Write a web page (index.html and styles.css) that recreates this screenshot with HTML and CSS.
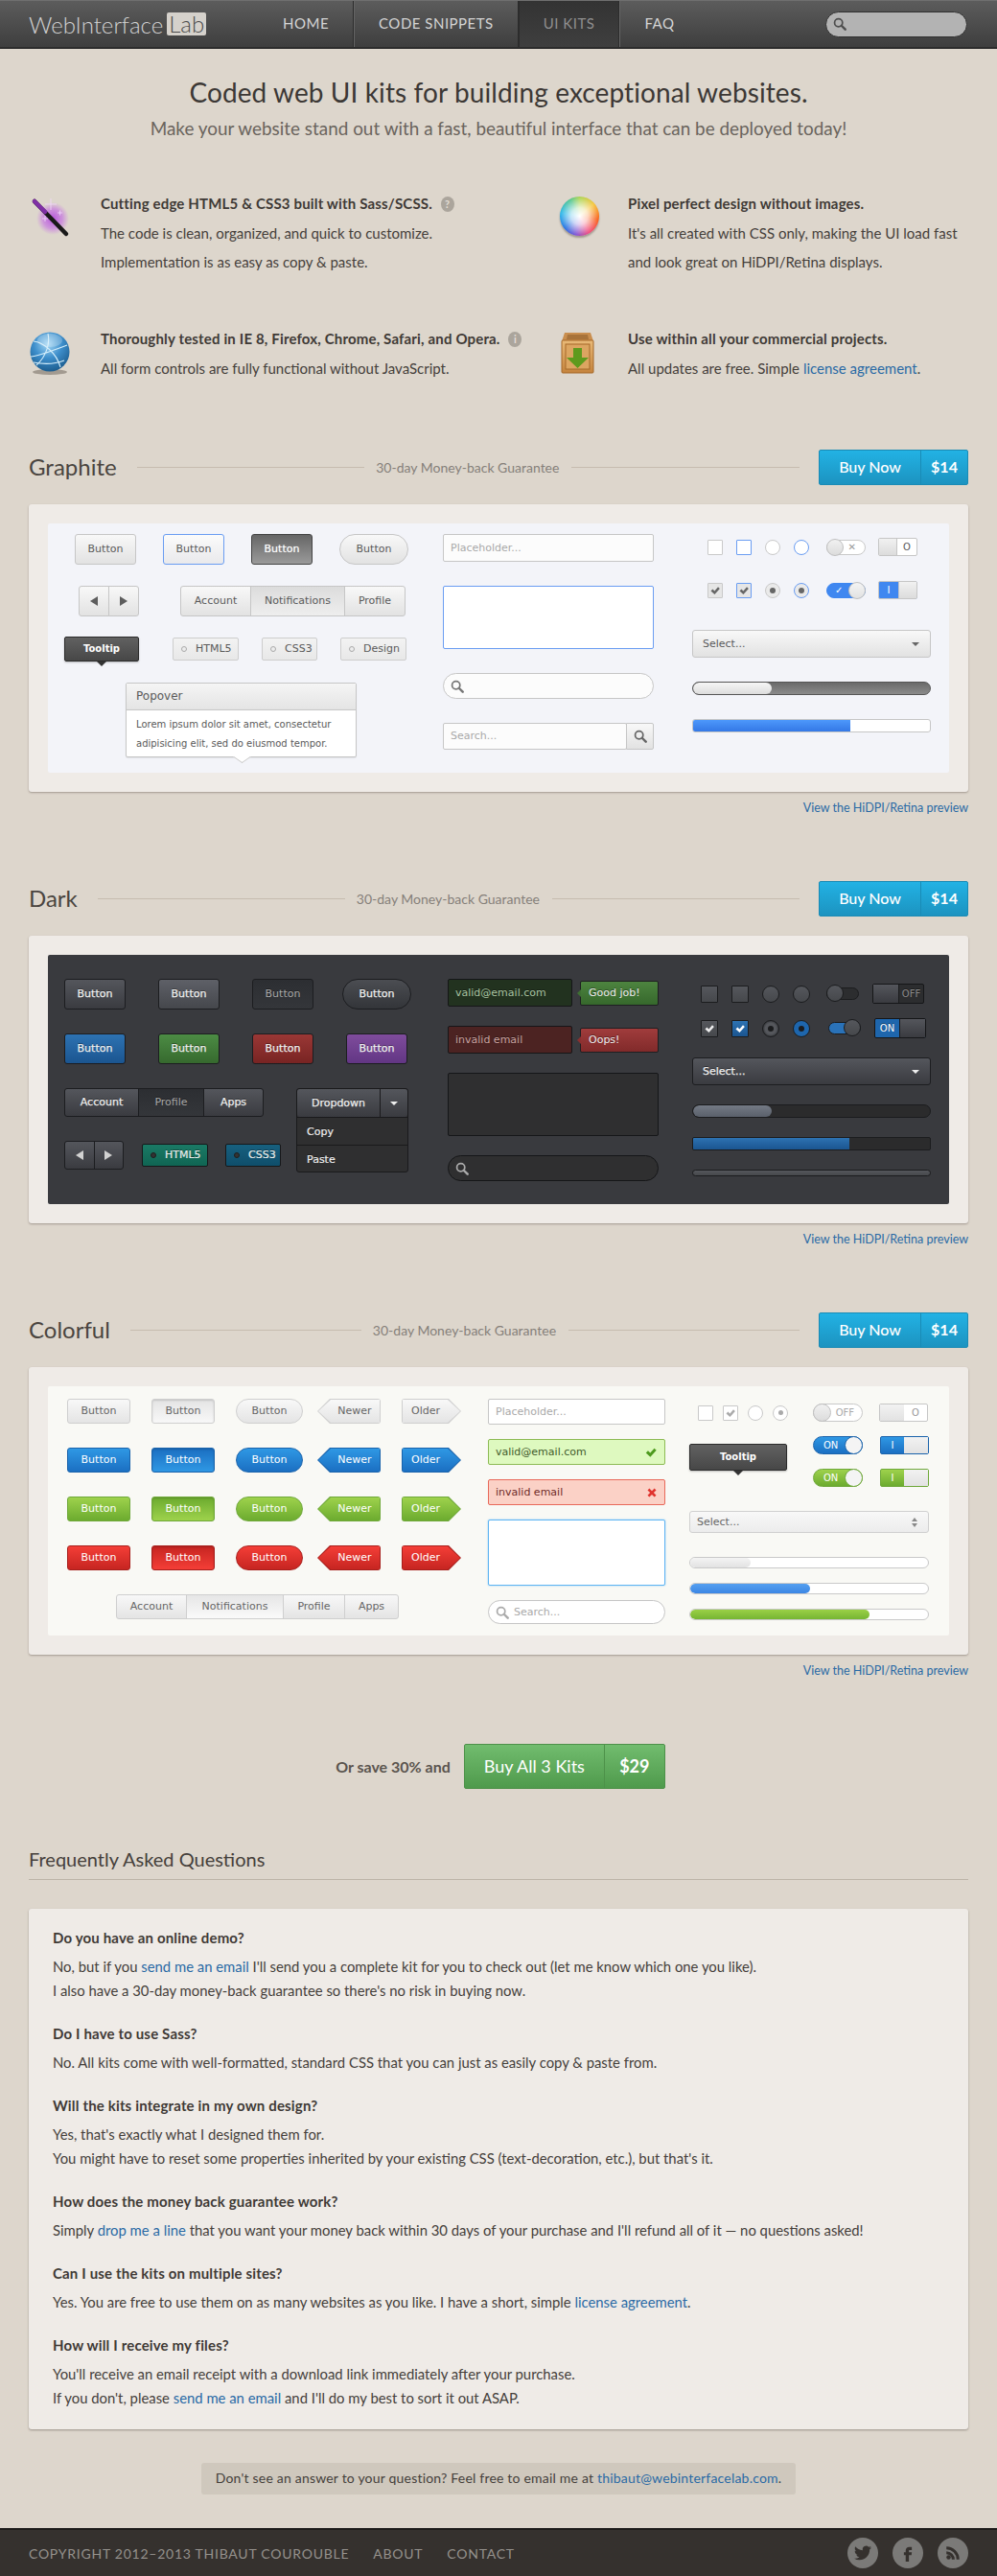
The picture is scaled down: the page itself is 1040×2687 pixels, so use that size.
FILE: index.html
```html
<!DOCTYPE html>
<html lang="en">
<head>
    <meta charset="UTF-8">
    <meta name="viewport" content="width=device-width, initial-scale=1.0">
    <title>Web Interface Lab - UI Kits</title>
    <link rel="stylesheet" href="styles.css">
</head>
<body>
    <svg class="sprites" width="0" height="0">
        <symbol id="i-search" viewBox="0 0 16 16"><circle cx="6.5" cy="6.5" r="4.7" fill="none" stroke="currentColor" stroke-width="2"/><path d="M10 10l4.5 4.5" stroke="currentColor" stroke-width="2.8" stroke-linecap="round"/></symbol>
        <symbol id="i-check" viewBox="0 0 16 16"><path d="M2 8.5l2.5-2.5 2.7 2.6L12 3l2.5 2.3-7.2 8z" fill="currentColor"/></symbol>
        <symbol id="i-cross" viewBox="0 0 16 16"><path d="M2 4.5L4.5 2 8 5.5 11.5 2 14 4.5 10.500 8 14 11.500 11.500 14 8 10.500 4.500 14 2 11.500 5.500 8z" fill="currentColor"/></symbol>
    </svg>

    <div class="topbar">
        <a class="logo" href="#">WebInterface<span>Lab</span></a>
        <ul class="menu">
            <li><a href="#">Home</a></li>
            <li><a href="#">Code Snippets</a></li>
            <li class="current"><a href="#">UI Kits</a></li>
            <li><a href="#">FAQ</a></li>
        </ul>
        <div class="topsearch"><svg class="ico14"><use href="#i-search"/></svg></div>
    </div>

    <div class="page">
        <h1>Coded web UI kits for building exceptional websites.</h1>
        <p class="lead">Make your website stand out with a fast, beautiful interface that can be deployed today!</p>

        <div class="features">
            <div class="feature">
                <svg class="ficon" viewBox="0 0 45 45">
                    <defs>
                        <radialGradient id="glow"><stop offset="0" stop-color="#b13fe0" stop-opacity=".85"/><stop offset=".6" stop-color="#c05fe6" stop-opacity=".55"/><stop offset="1" stop-color="#c86ee8" stop-opacity="0"/></radialGradient>
                    </defs>
                    <circle cx="25" cy="23" r="17" fill="url(#glow)"/>
                    <path d="M6 5l33 34" stroke="#1a1a1a" stroke-width="4.500" stroke-linecap="round"/>
                    <path d="M6 5l11 11" stroke="#7f2fa5" stroke-width="4.500" stroke-linecap="round"/>
                    <path d="M23 2v12M17 8h12M14 23h6M17 20v6M30 17h5M32.500 14.500v5" stroke="#f3d8fb" stroke-width=".8"/>
                </svg>
                <div>
                    <h3>Cutting edge HTML5 &amp; CSS3 built with Sass/SCSS. <span class="hint">?</span></h3>
                    <p>The code is clean, organized, and quick to customize.</p>
                    <p>Implementation is as easy as copy &amp; paste.</p>
                </div>
            </div>
            <div class="feature">
                <div class="ficon wheel-box"><div class="wheel"></div></div>
                <div>
                    <h3>Pixel perfect design without images.</h3>
                    <p>It's all created with CSS only, making the UI load fast</p>
                    <p>and look great on HiDPI/Retina displays.</p>
                </div>
            </div>
            <div class="feature">
                <svg class="ficon" viewBox="0 0 45 45">
                    <defs>
                        <radialGradient id="ball" cx=".45" cy=".3" r=".8"><stop offset="0" stop-color="#a5d8f5"/><stop offset=".45" stop-color="#3d8ecb"/><stop offset="1" stop-color="#14507f"/></radialGradient>
                    </defs>
                    <ellipse cx="22" cy="42" rx="18" ry="3" fill="#5b5348" opacity=".45"/>
                    <circle cx="22" cy="21" r="20.500" fill="url(#ball)"/>
                    <path d="M5 10c10 1 24 12 28 27M20 2c2 8 0 22-12 33M2 26c10-1 24-7 38-12M5 32c10 2 22 2 32-2" fill="none" stroke="#d4eefb" stroke-width="1.100"/>
                    <ellipse cx="22" cy="9" rx="13" ry="7" fill="#fff" opacity=".22"/>
                </svg>
                <div>
                    <h3>Thoroughly tested in IE 8, Firefox, Chrome, Safari, and Opera. <span class="hint">i</span></h3>
                    <p>All form controls are fully functional without JavaScript.</p>
                </div>
            </div>
            <div class="feature">
                <svg class="ficon" viewBox="0 0 45 45">
                    <defs>
                        <linearGradient id="wood" x1="0" x2="0" y1="0" y2="1"><stop offset="0" stop-color="#e9ba78"/><stop offset="1" stop-color="#c5843d"/></linearGradient>
                    </defs>
                    <path d="M9 1h27l3 9H6z" fill="#c98e4e"/>
                    <path d="M12 3h21l1 5H11z" fill="#a8733a"/>
                    <rect x="6" y="9" width="33" height="34" rx="1" fill="url(#wood)" stroke="#a5692a"/>
                    <rect x="10" y="13" width="25" height="26" fill="#dca561" stroke="#a5692a"/>
                    <path d="M18 17h9v10h7L22.500 38 11 27h7z" fill="#5f9a1d"/>
                </svg>
                <div>
                    <h3>Use within all your commercial projects.</h3>
                    <p>All updates are free. Simple <a href="#">license agreement</a>.</p>
                </div>
            </div>
        </div>

        <!-- graphite -->
        <div class="kit-head">
            <h2>Graphite</h2>
            <span class="rule"></span>
            <span class="guarantee">30-day Money-back Guarantee</span>
            <span class="rule"></span>
            <a class="buy" href="#"><span class="buy-label">Buy Now</span><span class="buy-price">$14</span></a>
        </div>
        <div class="kit">
            <div class="inner graphite">
                <div class="g-a">
                    <div class="row g-r1">
                        <div class="btn w64">Button</div>
                        <div class="btn w64 focus">Button</div>
                        <div class="btn w64 active">Button</div>
                        <div class="btn w72 pill">Button</div>
                    </div>
                    <div class="row g-r2">
                        <div class="pager"><div class="btn"><i class="tri-l"></i></div><div class="btn"><i class="tri-r"></i></div></div>
                        <div class="tabs">
                            <div class="btn g-t1">Account</div>
                            <div class="btn g-t2 on">Notifications</div>
                            <div class="btn g-t3">Profile</div>
                        </div>
                    </div>
                    <div class="row g-r3">
                        <div class="tip g-tip">Tooltip</div>
                        <div class="tags">
                            <div class="tag w69"><i></i>HTML5</div>
                            <div class="tag w58"><i></i>CSS3</div>
                            <div class="tag w69"><i></i>Design</div>
                        </div>
                    </div>
                    <div class="popover">
                        <div class="popover-title">Popover</div>
                        <div class="popover-body">Lorem ipsum dolor sit amet, consectetur adipisicing elit, sed do eiusmod tempor.</div>
                    </div>
                </div>
                <div class="g-b">
                    <div class="field g-input muted">Placeholder...</div>
                    <div class="field g-area focus"></div>
                    <div class="field g-search round"><svg class="ico14"><use href="#i-search"/></svg></div>
                    <div class="combo">
                        <div class="field muted">Search...</div>
                        <div class="btn"><svg class="ico14"><use href="#i-search"/></svg></div>
                    </div>
                </div>
                <div class="g-c">
                    <div class="ctl-row">
                        <i class="box"></i><i class="box focus"></i><i class="radio"></i><i class="radio focus"></i>
                        <div class="switch"><b class="knob"></b><span class="s-r">&#10005;</span></div>
                        <div class="toggle"><b></b><span>O</span></div>
                    </div>
                    <div class="ctl-row">
                        <i class="box"><svg class="ico12"><use href="#i-check"/></svg></i>
                        <i class="box focus"><svg class="ico12"><use href="#i-check"/></svg></i>
                        <i class="radio dot"></i><i class="radio focus dot"></i>
                        <div class="switch on"><span class="s-l">&#10003;</span><b class="knob"></b></div>
                        <div class="toggle on"><span>I</span><b></b></div>
                    </div>
                    <div class="btn select">Select...<i class="caret"></i></div>
                    <div class="bar bar-a"><div class="fill" style="width: 33%"></div></div>
                    <div class="bar bar-b"><div class="fill" style="width: 66.400%"></div></div>
                </div>
            </div>
        </div>
        <a class="retina" href="#">View the HiDPI/Retina preview</a>

        <!-- dark -->
        <div class="kit-head">
            <h2>Dark</h2>
            <span class="rule"></span>
            <span class="guarantee">30-day Money-back Guarantee</span>
            <span class="rule"></span>
            <a class="buy" href="#"><span class="buy-label">Buy Now</span><span class="buy-price">$14</span></a>
        </div>
        <div class="kit">
            <div class="inner dark">
                <div class="d-a">
                    <div class="row d-r1">
                        <div class="btn w64">Button</div>
                        <div class="btn w64 hover">Button</div>
                        <div class="btn w64 active">Button</div>
                        <div class="btn w72 pill">Button</div>
                    </div>
                    <div class="row d-r2">
                        <div class="btn w64 blue">Button</div>
                        <div class="btn w64 green">Button</div>
                        <div class="btn w64 red">Button</div>
                        <div class="btn w64 purple">Button</div>
                    </div>
                    <div class="d-low">
                        <div class="d-low-left">
                            <div class="tabs">
                                <div class="btn d-t1">Account</div>
                                <div class="btn d-t2 on">Profile</div>
                                <div class="btn d-t3">Apps</div>
                            </div>
                            <div class="d-r4">
                                <div class="pager"><div class="btn"><i class="tri-l"></i></div><div class="btn"><i class="tri-r"></i></div></div>
                                <div class="tag w69 teal"><i></i>HTML5</div>
                                <div class="tag w58 navy"><i></i>CSS3</div>
                            </div>
                        </div>
                        <div class="dropdown">
                            <div class="dropdown-top">
                                <div class="btn">Dropdown</div>
                                <div class="btn"><i class="caret"></i></div>
                            </div>
                            <div class="dropdown-item">Copy</div>
                            <div class="dropdown-item">Paste</div>
                        </div>
                    </div>
                </div>
                <div class="d-b">
                    <div class="d-field-row">
                        <div class="field valid">valid@email.com</div>
                        <div class="note good">Good job!</div>
                    </div>
                    <div class="d-field-row">
                        <div class="field invalid">invalid email</div>
                        <div class="note bad">Oops!</div>
                    </div>
                    <div class="field d-area"></div>
                    <div class="field d-search round"><svg class="ico14"><use href="#i-search"/></svg></div>
                </div>
                <div class="d-c">
                    <div class="ctl-row">
                        <i class="box"></i><i class="box"></i><i class="radio"></i><i class="radio"></i>
                        <div class="switch"><b class="knob"></b></div>
                        <div class="toggle"><b></b><span>OFF</span></div>
                    </div>
                    <div class="ctl-row">
                        <i class="box"><svg class="ico12"><use href="#i-check"/></svg></i>
                        <i class="box on"><svg class="ico12"><use href="#i-check"/></svg></i>
                        <i class="radio dot"></i><i class="radio on dot"></i>
                        <div class="switch on"><b class="knob"></b></div>
                        <div class="toggle on"><span>ON</span><b></b></div>
                    </div>
                    <div class="btn select">Select...<i class="caret"></i></div>
                    <div class="bar bar-a"><div class="fill" style="width: 33%"></div></div>
                    <div class="bar bar-b"><div class="fill" style="width: 66%"></div></div>
                    <div class="bar-slim"></div>
                </div>
            </div>
        </div>
        <a class="retina" href="#">View the HiDPI/Retina preview</a>

        <!-- colorful -->
        <div class="kit-head">
            <h2>Colorful</h2>
            <span class="rule"></span>
            <span class="guarantee">30-day Money-back Guarantee</span>
            <span class="rule"></span>
            <a class="buy" href="#"><span class="buy-label">Buy Now</span><span class="buy-price">$14</span></a>
        </div>
        <div class="kit">
            <div class="inner colorful">
                <div class="c-a">
                    <div class="c-row grey">
                        <div class="btn w66">Button</div><div class="btn w66 active">Button</div><div class="btn w70 pill">Button</div>
                        <div class="btn prev"><span>Newer</span></div><div class="btn next"><span>Older</span></div>
                    </div>
                    <div class="c-row blue">
                        <div class="btn w66">Button</div><div class="btn w66 active">Button</div><div class="btn w70 pill">Button</div>
                        <div class="btn prev"><span>Newer</span></div><div class="btn next"><span>Older</span></div>
                    </div>
                    <div class="c-row green">
                        <div class="btn w66">Button</div><div class="btn w66 active">Button</div><div class="btn w70 pill">Button</div>
                        <div class="btn prev"><span>Newer</span></div><div class="btn next"><span>Older</span></div>
                    </div>
                    <div class="c-row red">
                        <div class="btn w66">Button</div><div class="btn w66 active">Button</div><div class="btn w70 pill">Button</div>
                        <div class="btn prev"><span>Newer</span></div><div class="btn next"><span>Older</span></div>
                    </div>
                    <div class="tabs grey">
                        <div class="btn c-t1">Account</div>
                        <div class="btn c-t2 on">Notifications</div>
                        <div class="btn c-t3">Profile</div>
                        <div class="btn c-t4">Apps</div>
                    </div>
                </div>
                <div class="c-b">
                    <div class="field muted">Placeholder...</div>
                    <div class="field valid">valid@email.com<svg class="ico14"><use href="#i-check"/></svg></div>
                    <div class="field invalid">invalid email<svg class="ico12"><use href="#i-cross"/></svg></div>
                    <div class="field c-area"></div>
                    <div class="field c-search round muted"><svg class="ico14"><use href="#i-search"/></svg>Search...</div>
                </div>
                <div class="c-c">
                    <div class="ctl-row">
                        <i class="box"></i>
                        <i class="box"><svg class="ico12"><use href="#i-check"/></svg></i>
                        <i class="radio"></i><i class="radio dot"></i>
                        <div class="switch"><b class="knob"></b><span class="s-r">OFF</span></div>
                        <div class="toggle"><b></b><span>O</span></div>
                    </div>
                    <div class="c-mid">
                        <div class="tip c-tip">Tooltip</div>
                        <div class="c-switches">
                            <div class="c-pair blue">
                                <div class="switch on"><span class="s-l">ON</span><b class="knob"></b></div>
                                <div class="toggle on"><span>I</span><b></b></div>
                            </div>
                            <div class="c-pair green">
                                <div class="switch on"><span class="s-l">ON</span><b class="knob"></b></div>
                                <div class="toggle on"><span>I</span><b></b></div>
                            </div>
                        </div>
                    </div>
                    <div class="btn select">Select...<i class="updown"></i></div>
                    <div class="bar"><div class="fill plain" style="width: 25.500%"></div></div>
                    <div class="bar"><div class="fill blue" style="width: 50.500%"></div></div>
                    <div class="bar"><div class="fill green" style="width: 75.500%"></div></div>
                </div>
            </div>
        </div>
        <a class="retina" href="#">View the HiDPI/Retina preview</a>

        <div class="bundle">
            <span>Or save 30% and</span>
            <a class="buy buy-all" href="#"><span class="buy-label">Buy All 3 Kits</span><span class="buy-price">$29</span></a>
        </div>

        <h4 class="faq-title">Frequently Asked Questions</h4>
        <div class="faq">
            <h5>Do you have an online demo?</h5>
            <p>No, but if you <a href="#">send me an email</a> I'll send you a complete kit for you to check out (let me know which one you like).</p>
            <p>I also have a 30-day money-back guarantee so there's no risk in buying now.</p>
            <h5>Do I have to use Sass?</h5>
            <p>No. All kits come with well-formatted, standard CSS that you can just as easily copy &amp; paste from.</p>
            <h5>Will the kits integrate in my own design?</h5>
            <p>Yes, that's exactly what I designed them for.</p>
            <p>You might have to reset some properties inherited by your existing CSS (text-decoration, etc.), but that's it.</p>
            <h5>How does the money back guarantee work?</h5>
            <p>Simply <a href="#">drop me a line</a> that you want your money back within 30 days of your purchase and I'll refund all of it &mdash; no questions asked!</p>
            <h5>Can I use the kits on multiple sites?</h5>
            <p>Yes. You are free to use them on as many websites as you like. I have a short, simple <a href="#">license agreement</a>.</p>
            <h5>How will I receive my files?</h5>
            <p>You'll receive an email receipt with a download link immediately after your purchase.</p>
            <p>If you don't, please <a href="#">send me an email</a> and I'll do my best to sort it out ASAP.</p>
        </div>

        <div class="ask">Don't see an answer to your question? Feel free to email me at <a href="#">thibaut@webinterfacelab.com</a>.</div>
    </div>

    <div class="footer">
        <div class="footer-in">
            <span>Copyright 2012&ndash;2013 Thibaut Courouble</span>
            <a href="#">About</a>
            <a href="#">Contact</a>
            <div class="social">
                <a href="#"><svg viewBox="0 0 24 24"><path d="M23.950 4.570a10 10 0 0 1-2.820.770 4.960 4.960 0 0 0 2.160-2.720c-.950.550-2 .950-3.120 1.170a4.920 4.920 0 0 0-8.380 4.480C7.690 8.100 4.070 6.130 1.640 3.160a4.820 4.820 0 0 0-.660 2.470c0 1.710.870 3.210 2.190 4.100a4.900 4.900 0 0 1-2.230-.610v.060a4.920 4.920 0 0 0 3.950 4.830 5 5 0 0 1-2.210.080 4.940 4.940 0 0 0 4.600 3.420A9.870 9.870 0 0 1 0 19.540a13.940 13.940 0 0 0 7.550 2.210c9.050 0 14-7.500 14-13.980 0-.210 0-.420-.020-.630a9.940 9.940 0 0 0 2.460-2.550z"/></svg></a>
                <a href="#"><svg viewBox="0 0 24 24"><path d="M14 8h3.500V3.500H14c-3 0-5 2-5 5V11H6.500v4H9v9h4.500v-9H17l.5-4h-4V8.800c0-.5.200-.8.500-.8z"/></svg></a>
                <a href="#"><svg viewBox="0 0 24 24"><circle cx="6" cy="18" r="3"/><path d="M3 3v4a14 14 0 0 1 14 14h4A18 18 0 0 0 3 3zm0 6.500v4a7.500 7.500 0 0 1 7.500 7.500h4A11.500 11.500 0 0 0 3 9.500z"/></svg></a>
            </div>
        </div>
    </div>
</body>
</html>
```

FILE: styles.css
```css
*{
    margin: 0;
    padding: 0;
}
body{
    background: #ddd6cc;
    color: #45403b;
    font: 14px/25px Lato, "Open Sans", sans-serif;
}
a{
    color: #2a6aa5;
    text-decoration: none;
}
i, b{
    display: block;
    font-style: normal;
}
ul{
    list-style: none;
}
.sprites{
    position: absolute;
}
.ico14{
    width: 14px;
    height: 14px;
}
.ico12{
    width: 12px;
    height: 12px;
}

/* top bar */
.topbar{
    height: 48px;
    padding: 0 31px 0 30px;
    display: flex;
    align-items: center;
    background: linear-gradient(#5c5c5c, #3e3e3e);
    border-top: 1px solid #6f6f6f;
    border-bottom: 2px solid #2c2c2c;
}
.logo{
    color: #d2d2d2;
    font-size: 24px;
    font-weight: 300;
    display: flex;
    align-items: center;
    width: 240px;
}
.logo span{
    margin-left: 4px;
    width: 41px;
    height: 24px;
    line-height: 24px;
    text-align: center;
    background: #d5d1cb;
    color: #4a4a4a;
    border-radius: 2px;
}
.menu{
    display: flex;
    height: 48px;
}
.menu li{
    border-right: 1px solid #2c2c2c;
    border-left: 1px solid #666;
    padding: 0 25px;
    line-height: 47px;
    font-size: 15px;
    letter-spacing: .5px;
    text-transform: uppercase;
}
.menu li:first-child{
    border-left: 0;
}
.menu li:last-child{
    border-right: 0;
}
.menu a{
    color: #d4d4d4;
}
.menu .current{
    background: linear-gradient(#333, #3f3f3f);
    border-left: 1px solid #2c2c2c;
}
.menu .current a{
    color: #8f8f8f;
}
.topsearch{
    margin-left: auto;
    width: 148px;
    height: 27px;
    box-sizing: border-box;
    padding-left: 7px;
    display: flex;
    align-items: center;
    background: #b3b3b3;
    border: 1px solid #2f2f2f;
    border-radius: 14px;
    color: #4e4e4e;
}

/* intro */
.page{
    width: 980px;
    margin: 0 auto;
}
h1{
    padding-top: 25px;
    font-size: 28px;
    line-height: 40px;
    font-weight: 400;
    letter-spacing: .1px;
    text-align: center;
    color: #3c3835;
}
.lead{
    margin-top: 6px;
    font-size: 18.9px;
    line-height: 24px;
    text-align: center;
    color: #6a645d;
}
.features{
    margin-top: 51px;
    display: grid;
    grid-template-columns: 550px 430px;
    row-gap: 50px;
}
.feature{
    display: flex;
    font-size: 15px;
    line-height: 30px;
}
.feature h3{
    font-size: 15px;
    font-weight: 700;
    letter-spacing: .16px;
    line-height: 31px;
    color: #3f3a36;
}
.ficon{
    flex: none;
    width: 45px;
    height: 45px;
    margin: 8px 30px 0 0;
}
.wheel-box{
    display: flex;
    justify-content: center;
    padding-left: 3px;
    box-sizing: border-box;
}
.wheel{
    width: 41px;
    height: 41px;
    border-radius: 50%;
    background:
        radial-gradient(circle, #fff 0, rgba(255,255,255,.75) 30%, rgba(255,255,255,0) 72%),
        conic-gradient(#a7d24a, #f5c331 50deg, #f9560c 100deg, #f0447a 150deg, #7d4bd0 190deg, #1e6ce0 230deg, #23b4e8 280deg, #4cc48b 330deg, #a7d24a);
    box-shadow: 0 2px 2px rgba(70,60,50,.4);
}
.hint{
    display: inline-block;
    width: 14px;
    height: 16px;
    margin-left: 5px;
    background: #aba59c;
    border-radius: 50%;
    color: #e4ded5;
    font-size: 11px;
    line-height: 16px;
    text-align: center;
    vertical-align: 1px;
}

/* kit heading */
.kit-head{
    margin-top: 66px;
    display: flex;
    align-items: center;
}
.features + .kit-head{
    margin-top: 70px;
}
.kit-head h2{
    font-size: 24px;
    line-height: 35px;
    padding-bottom: 2px;
    font-weight: 400;
    color: #4a4540;
    margin-right: 21px;
}
.rule{
    flex: 1;
    height: 1px;
    background: #c6bcaf;
}
.guarantee{
    margin: 0 13px 0 12px;
    font-size: 14px;
    color: #85807a;
}
.buy{
    flex: none;
    width: 156px;
    margin-left: 20px;
    height: 37px;
    box-sizing: border-box;
    display: flex;
    color: #fff;
    font-size: 16px;
    line-height: 34px;
    text-align: center;
    background: linear-gradient(#22b2e4, #1c93c0);
    border: 1px solid #1a8bb5;
    border-radius: 2px;
}
.buy-label{
    flex: none;
    width: 105px;
    border-right: 1px solid #1a8bb5;
    font-weight: 500;
}
.buy-price{
    flex: 1;
    font-weight: 700;
}
.kit{
    margin-top: 20px;
    height: 300px;
    box-sizing: border-box;
    padding: 20px;
    background: #efebe7;
    border-radius: 3px;
    box-shadow: 0 1px 2px rgba(90,80,70,.45);
}
.inner{
    height: 260px;
    display: flex;
    border-radius: 2px;
    font: 11px/20px "DejaVu Sans", sans-serif;
}
.retina{
    display: block;
    margin-top: 7px;
    font-size: 12.5px;
    line-height: 20px;
    text-align: right;
}

/* shared widgets */
.row{
    display: flex;
}
.btn{
    box-sizing: border-box;
    display: flex;
    align-items: center;
    justify-content: center;
    border: 1px solid #c6c6c6;
    border-radius: 3px;
}
.w64{ width: 64px; }
.w66{ width: 66px; }
.w70{ width: 70px; }
.w72{ width: 72px; }
.w69{ width: 69px; }
.w58{ width: 58px; }
.pill{
    border-radius: 16px;
}
.tri-l, .tri-r{
    width: 0;
    height: 0;
    border: 5px solid transparent;
    border-width: 5px 8px;
}
.tri-l{
    border-right-color: #5d5d5d;
    margin-left: -8px;
}
.tri-r{
    border-left-color: #5d5d5d;
    margin-right: -8px;
}
.caret{
    width: 0;
    height: 0;
    border: 4px solid transparent;
    border-top: 4px solid #666;
    border-bottom: 0;
    border-width: 4px 4px 0;
}
.tabs, .pager, .combo, .dropdown-top{
    display: flex;
}
.tabs .btn, .pager .btn, .combo .btn, .dropdown-top .btn{
    border-radius: 0;
    margin-left: -1px;
}
.tabs .btn:first-child, .pager .btn:first-child, .dropdown-top .btn:first-child{
    border-radius: 3px 0 0 3px;
    margin-left: 0;
}
.tabs .btn:last-child, .pager .btn:last-child, .dropdown-top .btn:last-child{
    border-radius: 0 3px 3px 0;
}
.pager .btn{
    width: 32px;
    height: 100%;
}
.tip{
    position: relative;
    box-sizing: border-box;
    display: flex;
    align-items: center;
    justify-content: center;
    color: #fff;
    font-size: 10px;
    font-weight: 700;
    background: linear-gradient(#616161, #474747);
    border: 1px solid #2b2b2b;
    border-radius: 2px;
    box-shadow: 0 1px 2px rgba(0,0,0,.25);
}
.tip::after{
    content: "";
    position: absolute;
    left: 50%;
    bottom: -6px;
    margin-left: -5px;
    border: 5px solid transparent;
    border-top-color: #333;
    border-bottom: 0;
}
.tag{
    box-sizing: border-box;
    height: 24px;
    display: flex;
    align-items: center;
    border: 1px solid #cdcdcd;
    border-radius: 2px;
    padding-left: 8px;
}
.tag i{
    width: 4px;
    height: 4px;
    margin-right: 9px;
    border: 1px solid #aaa;
    border-radius: 50%;
}
.field{
    box-sizing: border-box;
    display: flex;
    align-items: center;
    padding: 0 7px;
    background: #fff;
    border: 1px solid #c6c6c6;
    border-radius: 2px;
    font-size: 11px;
}
.muted{
    color: #a9a9a9;
}
.round{
    border-radius: 14px;
}
.ctl-row{
    display: flex;
    align-items: center;
}
.box, .radio{
    flex: none;
    box-sizing: border-box;
    display: flex;
    align-items: center;
    justify-content: center;
    border: 1px solid #c9c9c9;
    border-radius: 1px;
    background: #fff;
    color: #666;
}
.radio{
    border-radius: 50%;
}
.radio.dot::after{
    content: "";
    width: 6px;
    height: 6px;
    border-radius: 50%;
    background: #666;
}
.switch{
    position: relative;
    box-sizing: border-box;
    border: 1px solid #c9c9c9;
    background: #fff;
    color: #999;
}
.knob{
    position: absolute;
    top: -2px;
    box-sizing: border-box;
    border-radius: 50%;
    border: 1px solid #c0c0c0;
    background: linear-gradient(#f1f1f1, #dcdcdc);
}
.s-r, .s-l{
    position: absolute;
    top: 0;
    bottom: 0;
    display: flex;
    align-items: center;
}
.toggle{
    box-sizing: border-box;
    display: flex;
    align-items: stretch;
    border: 1px solid #c6c6c6;
    border-radius: 2px;
    background: #fff;
}
.toggle b, .toggle span{
    flex: 1;
    display: flex;
    align-items: center;
    justify-content: center;
}
.select{
    justify-content: flex-start;
    position: relative;
    padding-left: 10px;
}
.select .caret, .select .updown{
    position: absolute;
    right: 11px;
    top: 50%;
    margin-top: -2px;
}
.bar{
    box-sizing: border-box;
    overflow: hidden;
}
.fill{
    height: 100%;
}

/* graphite */
.graphite{
    background: #f3f4f9;
    color: #5a5a5a;
}
.graphite .btn{
    background: linear-gradient(#f8f8f8, #e2e2e2);
}
.graphite .btn.focus{
    border-color: #6a9df2;
    background: linear-gradient(#fbfbfb, #e9e9ec);
}
.graphite .btn.active{
    border-color: #444;
    background: linear-gradient(#666, #9a9a9a);
    color: #fff;
    text-shadow: 0 0 1px rgba(255,255,255,.6);
}
.graphite .btn.on{
    background: linear-gradient(#dcdcdc, #eee);
}
.g-a{
    width: 359px;
    margin-left: 17px;
    padding-top: 11px;
}
.g-r1{
    height: 32px;
    padding-left: 11px;
    gap: 28px;
}
.g-r2{
    height: 32px;
    margin-top: 22px;
    padding-left: 15px;
    gap: 43px;
}
.g-t1{ width: 74px; }
.g-t2{ width: 99px; }
.g-t3{ width: 64px; }
.g-r3{
    margin-top: 21px;
    height: 26px;
    align-items: center;
    gap: 35px;
}
.g-tip{
    width: 78px;
    height: 26px;
}
.tags{
    display: flex;
    gap: 24px;
}
.graphite .tag{
    background: linear-gradient(#f3f3f3, #e8e8e8);
}
.popover{
    position: relative;
    width: 241px;
    height: 78px;
    box-sizing: border-box;
    margin: 22px 0 0 64px;
    background: #fff;
    border: 1px solid #c6c6c6;
    border-radius: 2px;
    box-shadow: 0 1px 1px rgba(0,0,0,.08);
}
.popover::after{
    content: "";
    position: absolute;
    left: 50%;
    bottom: -7px;
    width: 12px;
    height: 12px;
    margin-left: -6px;
    background: #fff;
    border: solid #c6c6c6;
    border-width: 0 1px 1px 0;
    transform: scaleY(.7) rotate(45deg);
}
.popover-title{
    height: 27px;
    padding-left: 10px;
    line-height: 26px;
    font-size: 12px;
    background: linear-gradient(#f5f5f5, #e4e4e4);
    border-bottom: 1px solid #c6c6c6;
}
.popover-body{
    padding: 5px 10px 0;
    font-size: 10px;
    line-height: 20px;
}
.g-b{
    width: 220px;
    margin-left: 36px;
    padding-top: 11px;
}
.g-input{
    height: 29px;
    background: #fcfcfc;
}
.g-area{
    height: 66px;
    margin-top: 25px;
}
.g-area.focus{
    border-color: #6a9df2;
}
.g-search{
    height: 27px;
    margin-top: 25px;
    background: #fcfcfc;
    color: #777;
}
.combo{
    height: 28px;
    margin-top: 25px;
}
.combo .field{
    flex: 1;
    background: #fcfcfc;
}
.combo .btn{
    width: 29px;
    color: #666;
    border-radius: 0 2px 2px 0;
}
.g-c{
    width: 249px;
    margin-left: 40px;
    padding-top: 15px;
}
.g-c .ctl-row{
    height: 19px;
    padding-left: 16px;
    gap: 14px;
}
.g-c .ctl-row + .ctl-row{
    margin-top: 26px;
}
.g-c .box, .g-c .radio{
    width: 16px;
    height: 16px;
}
.g-c .focus{
    border-color: #6a9df2;
}
.graphite .box:has(svg){
    background: #e6e6e6;
}
.graphite .radio.dot{
    background: #eaeaea;
}
.g-c .switch{
    width: 41px;
    height: 16px;
    margin-left: 4px;
    border-radius: 9px;
}
.g-c .switch .knob{
    width: 18px;
    height: 18px;
    left: -1px;
}
.g-c .switch.on{
    background: #3f87f0;
    border-color: #3f87f0;
}
.g-c .switch.on .knob{
    left: auto;
    right: -1px;
    background: linear-gradient(#f4f4f4, #e2e2e2);
}
.g-c .s-r{
    right: 9px;
    font-size: 10px;
}
.g-c .s-l{
    left: 8px;
    color: #fff;
    font-size: 10px;
}
.g-c .toggle{
    width: 41px;
    height: 19px;
    font-size: 10px;
    margin-left: -1px;
}
.g-c .toggle b{
    flex: none;
    width: 18px;
    background: linear-gradient(#f1f1f1, #dcdcdc);
    border-right: 1px solid #c6c6c6;
}
.g-c .toggle.on b{
    border-right: 0;
    border-left: 1px solid #c6c6c6;
}
.g-c .toggle.on{
    background: #3f87f0;
    color: #fff;
}
.g-c .select{
    height: 29px;
    margin-top: 32px;
}
.g-c .bar{
    height: 14px;
    margin-top: 25px;
    border: 1px solid #c6c6c6;
    border-radius: 3px;
    background: #fff;
}
.g-c .bar-a{
    border: 1px solid #555;
    border-radius: 7px;
    background: linear-gradient(#6a6a6a, #8b8b8b);
}
.g-c .bar-a .fill{
    background: linear-gradient(#f6f6f6, #ddd);
    border-radius: 7px;
}
.g-c .bar-b .fill{
    background: linear-gradient(#4d98fb, #3478e6);
}

/* dark */
.dark{
    background: #393a3e;
    color: #f0f0f0;
    text-shadow: 0 -1px 0 rgba(0,0,0,.4);
}
.dark .btn{
    border-color: #1c1d20;
    background: linear-gradient(#54565c, #3a3b40);
    -webkit-text-stroke: .25px;
}
.dark .btn.hover{
    background: linear-gradient(#5e6067, #45474c);
}
.dark .btn.active, .dark .btn.on{
    background: linear-gradient(#2c2e32, #34363a);
    color: #a9a9a9;
    -webkit-text-stroke: 0;
}
.dark .btn.pill{
    background: linear-gradient(#4b4d52, #333539);
}
.dark .btn.blue{ background: linear-gradient(#2d72b2, #1b5590); }
.dark .btn.green{ background: linear-gradient(#4c8c44, #36692e); }
.dark .btn.red{ background: linear-gradient(#9a3735, #782423); }
.dark .btn.purple{ background: linear-gradient(#7f4c9c, #623684); }
.dark .tri-l{ border-right-color: #d2d2d2; }
.dark .tri-r{ border-left-color: #d2d2d2; }
.dark .caret{ border-top-color: #eee; }
.d-a{
    width: 362px;
    margin-left: 17px;
    padding-top: 25px;
}
.d-r1{
    height: 32px;
    gap: 34px;
}
.d-r1 .pill{
    margin-left: -4px;
}
.d-r2{
    height: 32px;
    margin-top: 25px;
    gap: 34px;
}
.d-low{
    display: flex;
    margin-top: 25px;
}
.d-low-left{
    width: 242px;
}
.d-low .tabs{
    height: 30px;
}
.d-t1{ width: 78px; }
.d-t2{ width: 69px; }
.d-t3{ width: 63px; }
.d-r4{
    display: flex;
    align-items: center;
    height: 30px;
    margin-top: 25px;
}
.d-r4 .pager{
    width: 62px;
    height: 30px;
    margin-right: 19px;
}
.d-r4 .tag{
    border-color: #16181a;
    color: #e8f0ee;
    -webkit-text-stroke: .2px;
}
.d-r4 .tag i{
    border-color: #1e1e1e;
    background: #333;
}
.teal{
    background: linear-gradient(#1a7a65, #106553);
    margin-right: 18px;
}
.navy{
    background: linear-gradient(#17607f, #0f4e6b);
}
.dropdown{
    width: 117px;
    height: 88px;
    box-sizing: border-box;
    background: #2f2f30;
    border: 1px solid #1a1a1c;
    border-radius: 3px;
}
.dropdown-top{
    height: 29px;
    border-bottom: 1px solid #1a1a1c;
    margin-bottom: -1px;
    box-sizing: content-box;
}
.dropdown-top .btn{
    border: 0;
    height: 29px;
}
.dropdown-top .btn:first-child{
    width: 87px;
    border-right: 1px solid #1a1a1c;
}
.dropdown-top .btn:last-child{
    flex: 1;
    margin-left: 0;
}
.dropdown-item{
    height: 28px;
    padding-left: 10px;
    line-height: 29px;
    border-top: 1px solid #1a1a1c;
    -webkit-text-stroke: .2px;
}
.d-b{
    width: 220px;
    margin-left: 38px;
    padding-top: 25px;
}
.d-field-row{
    display: flex;
    align-items: center;
    justify-content: space-between;
    height: 29px;
    margin-bottom: 20px;
}
.dark .field{
    border-color: #151618;
}
.d-field-row .field{
    width: 130px;
    height: 29px;
}
.dark .valid{
    background: #22321f;
    color: #aac6a2;
}
.dark .invalid{
    background: #4c2322;
    color: #c9a3a1;
}
.note{
    position: relative;
    box-sizing: border-box;
    width: 82px;
    height: 26px;
    padding-left: 8px;
    line-height: 23px;
    color: #eee;
    border: 1px solid #1e1f21;
    border-radius: 2px;
}
.note::before{
    content: "";
    position: absolute;
    left: -4px;
    top: 8px;
    border: 4px solid transparent;
    border-left: 0;
}
.good{
    background: linear-gradient(#4d843f, #36682c);
}
.good::before{
    border-right-color: #3e6f33;
}
.bad{
    background: linear-gradient(#a03c3c, #812a2a);
}
.bad::before{
    border-right-color: #8b3030;
}
.d-area{
    height: 66px;
    background: #2f2f30;
}
.d-search{
    height: 27px;
    margin-top: 20px;
    background: #2f2f30;
    color: #aaa;
}
.d-c{
    width: 249px;
    margin-left: 35px;
    padding-top: 30px;
}
.d-c .ctl-row{
    height: 21px;
    padding-left: 9px;
    gap: 14px;
}
.d-c .ctl-row + .ctl-row{
    margin-top: 15px;
}
.d-c .box, .d-c .radio{
    width: 18px;
    height: 18px;
    border-color: #1b1c1e;
    background: linear-gradient(#55575c, #46484c);
    color: #eee;
}
.d-c .radio.dot{
    background: radial-gradient(circle, #55575c 50%, #3b3d41 70%);
    border-width: 1px;
}
.d-c .radio.dot::after{
    background: #1b1c1e;
}
.d-c .box.on{
    background: linear-gradient(#2d72b2, #1b5590);
    color: #fff;
}
.d-c .radio.on{
    background: #1e66ad;
}
.d-c .switch{
    width: 34px;
    height: 13px;
    margin-left: 3px;
    border-radius: 7px;
    border-color: #1b1c1e;
    background: #2c2d2f;
}
.d-c .knob{
    top: -4px;
    left: -1px;
    width: 18px;
    height: 18px;
    border-color: #1b1c1e;
    background: linear-gradient(#55575c, #46484c);
}
.d-c .switch.on{
    background: #2a72b8;
    margin-left: 5px;
}
.d-c .switch.on .knob{
    left: auto;
    right: -1px;
}
.d-c .toggle{
    width: 54px;
    height: 21px;
    margin-left: 0;
    border-color: #151618;
    background: #2c2d2f;
    color: #8b8b8b;
    font-size: 10px;
}
.d-c .toggle b{
    flex: none;
    width: 26px;
    background: linear-gradient(#54565c, #3a3b40);
    border-right: 1px solid #1b1c1e;
}
.d-c .toggle.on{
    background: #1e66ad;
    color: #fff;
}
.d-c .toggle.on b{
    border-right: 0;
    border-left: 1px solid #1b1c1e;
}
.d-c .select{
    height: 29px;
    margin-top: 20px;
}
.d-c .bar{
    height: 14px;
    margin-top: 20px;
    border: 1px solid #1b1c1e;
    background: #2b2b2c;
    border-radius: 2px;
}
.d-c .bar-a{
    border-radius: 7px;
}
.d-c .bar-a .fill{
    background: linear-gradient(#747a85, #5a606b);
    border-radius: 7px;
}
.d-c .bar-b .fill{
    background: linear-gradient(#2d72b2, #1b5590);
}
.bar-slim{
    height: 7px;
    margin-top: 20px;
    box-sizing: border-box;
    border: 1px solid #1b1c1e;
    border-radius: 4px;
    background: linear-gradient(#55575c, #46484c);
}

/* colorful */
.colorful{
    background: #f9f9f5;
    color: #666;
}
.grey{ --top: #f8f8f8; --bot: #e4e4e4; --edge: #cfcfcf; --ink: #666; }
.blue{ --top: #2f98e4; --bot: #1b6fc2; --edge: #1a63ab; --ink: #fff; }
.green{ --top: #9ed24c; --bot: #6cab2f; --edge: #6fa83a; --ink: #fff; }
.red{ --top: #f43e37; --bot: #c62521; --edge: #a71f1c; --ink: #fff; }
.c-a{
    width: 411px;
    margin-left: 20px;
    padding-top: 13px;
}
.c-row{
    display: flex;
    height: 26px;
    margin-bottom: 25px;
    gap: 22px;
}
.colorful .btn{
    color: var(--ink);
    border-color: var(--edge);
    background: linear-gradient(var(--top), var(--bot));
}
.colorful .btn.active{
    background: linear-gradient(var(--bot), var(--top));
    box-shadow: inset 0 1px 2px rgba(0,0,0,.15);
}
.c-row .pill{
    margin-right: -7px;
}
.colorful .prev, .colorful .next{
    position: relative;
    border: 0;
    background: var(--edge);
}
.colorful .prev{
    width: 66px;
    padding-left: 12px;
    clip-path: polygon(13px 0, 100% 0, 100% 100%, 13px 100%, 0 50%);
}
.colorful .next{
    width: 62px;
    padding-right: 12px;
    clip-path: polygon(0 0, 49px 0, 100% 50%, 49px 100%, 0 100%);
}
.prev::before, .next::before{
    content: "";
    position: absolute;
    inset: 1px;
    background: linear-gradient(var(--top), var(--bot));
}
.prev::before{
    clip-path: polygon(13px 0, 100% 0, 100% 100%, 13px 100%, 0 50%);
}
.next::before{
    clip-path: polygon(0 0, 47px 0, 100% 50%, 47px 100%, 0 100%);
}
.prev span, .next span{
    position: relative;
}
.colorful .tabs{
    height: 26px;
    margin-left: 51px;
}
.c-t1{ width: 74px; }
.c-t2{ width: 102px; }
.c-t3{ width: 65px; }
.c-t4{ width: 57px; }
.colorful .tabs .on{
    background: linear-gradient(#e6e6e6, #fafafa);
}
.c-b{
    width: 185px;
    margin-left: 28px;
    padding-top: 13px;
    display: flex;
    flex-direction: column;
    gap: 15px;
}
.c-b .field{
    height: 27px;
    flex: none;
    justify-content: space-between;
}
.c-b .valid{
    background: #def9bf;
    border-color: #8dbb55;
    color: #3f5a2a;
}
.c-b .valid svg{
    color: #4d9a1e;
}
.c-b .invalid{
    background: #fbd1c6;
    border-color: #e8695a;
    color: #6e2b28;
}
.c-b .invalid svg{
    color: #e0342e;
}
.c-b .c-area{
    height: 69px;
    border: 1px solid #5eb4f2;
    box-shadow: 0 0 2px #8ccbf5;
}
.c-b .c-search{
    height: 25px;
    justify-content: flex-start;
    gap: 5px;
    border-radius: 13px;
}
.c-search svg{
    color: #aaa;
}
.c-c{
    width: 250px;
    margin-left: 25px;
    padding-top: 18px;
}
.c-c > .ctl-row{
    height: 19px;
    padding-left: 9px;
    gap: 10px;
}
.c-c .box, .c-c .radio{
    width: 16px;
    height: 16px;
    color: #aaa;
}
.c-c .radio.dot::after{
    width: 5px;
    height: 5px;
    background: #aaa;
}
.c-c .switch{
    width: 52px;
    height: 19px;
    border-radius: 10px;
    font-size: 10px;
}
.c-c > .ctl-row .switch{
    margin-left: 16px;
}
.c-c .knob{
    top: -1px;
    left: -1px;
    width: 19px;
    height: 19px;
}
.c-c .s-r{
    right: 8px;
    color: #aaa;
}
.c-c .switch.on{
    color: #fff;
    border-color: var(--edge);
    background: linear-gradient(var(--top), var(--bot));
}
.c-c .switch.on .knob{
    left: auto;
    right: -1px;
    border-color: var(--edge);
    background: #f4f4f4;
}
.c-c .s-l{
    left: 10px;
}
.c-c .toggle{
    width: 51px;
    height: 19px;
    font-size: 10px;
    color: #999;
}
.c-c > .ctl-row .toggle{
    margin-left: 7px;
}
.c-c .toggle b{
    flex: none;
    width: 25px;
    background: linear-gradient(#f2f2f2, #e2e2e2);
}
.c-c .toggle.on{
    color: #fff;
    border-color: var(--edge);
    background: linear-gradient(var(--top), var(--bot));
}
.c-mid{
    display: flex;
    justify-content: space-between;
    margin-top: 15px;
}
.c-tip{
    width: 102px;
    height: 28px;
    margin-top: 8px;
}
.c-switches{
    width: 121px;
}
.c-pair{
    display: flex;
    justify-content: space-between;
    margin-bottom: 15px;
}
.colorful .select{
    height: 23px;
    margin-top: 10px;
    padding-left: 7px;
    --top: #f8f8f8;
    --bot: #ececec;
    --edge: #d0d0d0;
    --ink: #666;
}
.updown{
    width: 0;
    height: 0;
    margin-top: -5px !important;
    border: 3px solid transparent;
    border-bottom: 4px solid #888;
    border-top: 0;
}
.updown::after{
    content: "";
    display: block;
    width: 0;
    height: 0;
    margin: 6px 0 0 -3px;
    border: 3px solid transparent;
    border-top: 4px solid #888;
    border-bottom: 0;
}
.c-c .bar{
    height: 12px;
    margin-top: 15px;
    background: #fff;
    border: 1px solid #c9c9c9;
    border-radius: 6px;
}
.c-c .select + .bar{
    margin-top: 25px;
}
.fill.plain{
    background: linear-gradient(#f4f4f4, #e2e2e2);
    border-radius: 6px;
}
.fill.blue{
    background: linear-gradient(#55a0f0, #3c86e4);
    border-radius: 6px;
}
.fill.green{
    background: linear-gradient(#9ad046, #76b532);
    border-radius: 6px;
}

/* bottom */
.bundle{
    margin-top: 66px;
    display: flex;
    justify-content: center;
    align-items: center;
    padding-left: 4px;
    font-size: 16px;
    font-weight: 700;
    color: #5a544e;
}
.buy-all{
    width: 210px;
    margin-left: 14px;
    height: 47px;
    line-height: 44px;
    font-size: 18px;
    background: linear-gradient(#71bc6e, #4f9a4c);
    border-color: #4d9149;
}
.buy-all .buy-label{
    width: 145px;
    border-color: #4d9149;
    font-weight: 400;
}
.faq-title{
    margin-top: 58px;
    padding-bottom: 6px;
    font-size: 20px;
    line-height: 30px;
    font-weight: 400;
    color: #45403b;
    border-bottom: 1px solid #bdb4a8;
}
.faq{
    margin-top: 30px;
    padding: 18px 25px 20px;
    font-size: 14.85px;
    background: #efebe7;
    border-radius: 3px;
    box-shadow: 0 1px 2px rgba(90,80,70,.5);
}
.faq h5{
    margin-bottom: 5px;
    font-size: 15px;
    font-weight: 700;
    letter-spacing: .16px;
    color: #3f3a36;
}
.faq p + h5{
    margin-top: 20px;
}
.ask{
    width: 620px;
    height: 33px;
    margin: 35px auto;
    box-sizing: border-box;
    line-height: 32px;
    letter-spacing: .2px;
    text-align: center;
    background: #cfc8bd;
    border-radius: 3px;
}
.footer{
    height: 50px;
    box-sizing: border-box;
    background: #35312e;
    border-top: 2px solid #1d1b1a;
}
.footer-in{
    width: 980px;
    height: 48px;
    margin: 0 auto;
    display: flex;
    align-items: center;
    gap: 25px;
    color: #96928d;
    font-size: 14px;
    letter-spacing: .75px;
    text-transform: uppercase;
}
.footer-in > a{
    color: #96928d;
}
.social{
    margin-left: auto;
    display: flex;
    gap: 15px;
}
.social a{
    width: 32px;
    height: 32px;
    display: flex;
    align-items: center;
    justify-content: center;
    background: #7b7a78;
    border-radius: 50%;
}
.social svg{
    width: 18px;
    height: 18px;
    fill: #35312e;
}
```
